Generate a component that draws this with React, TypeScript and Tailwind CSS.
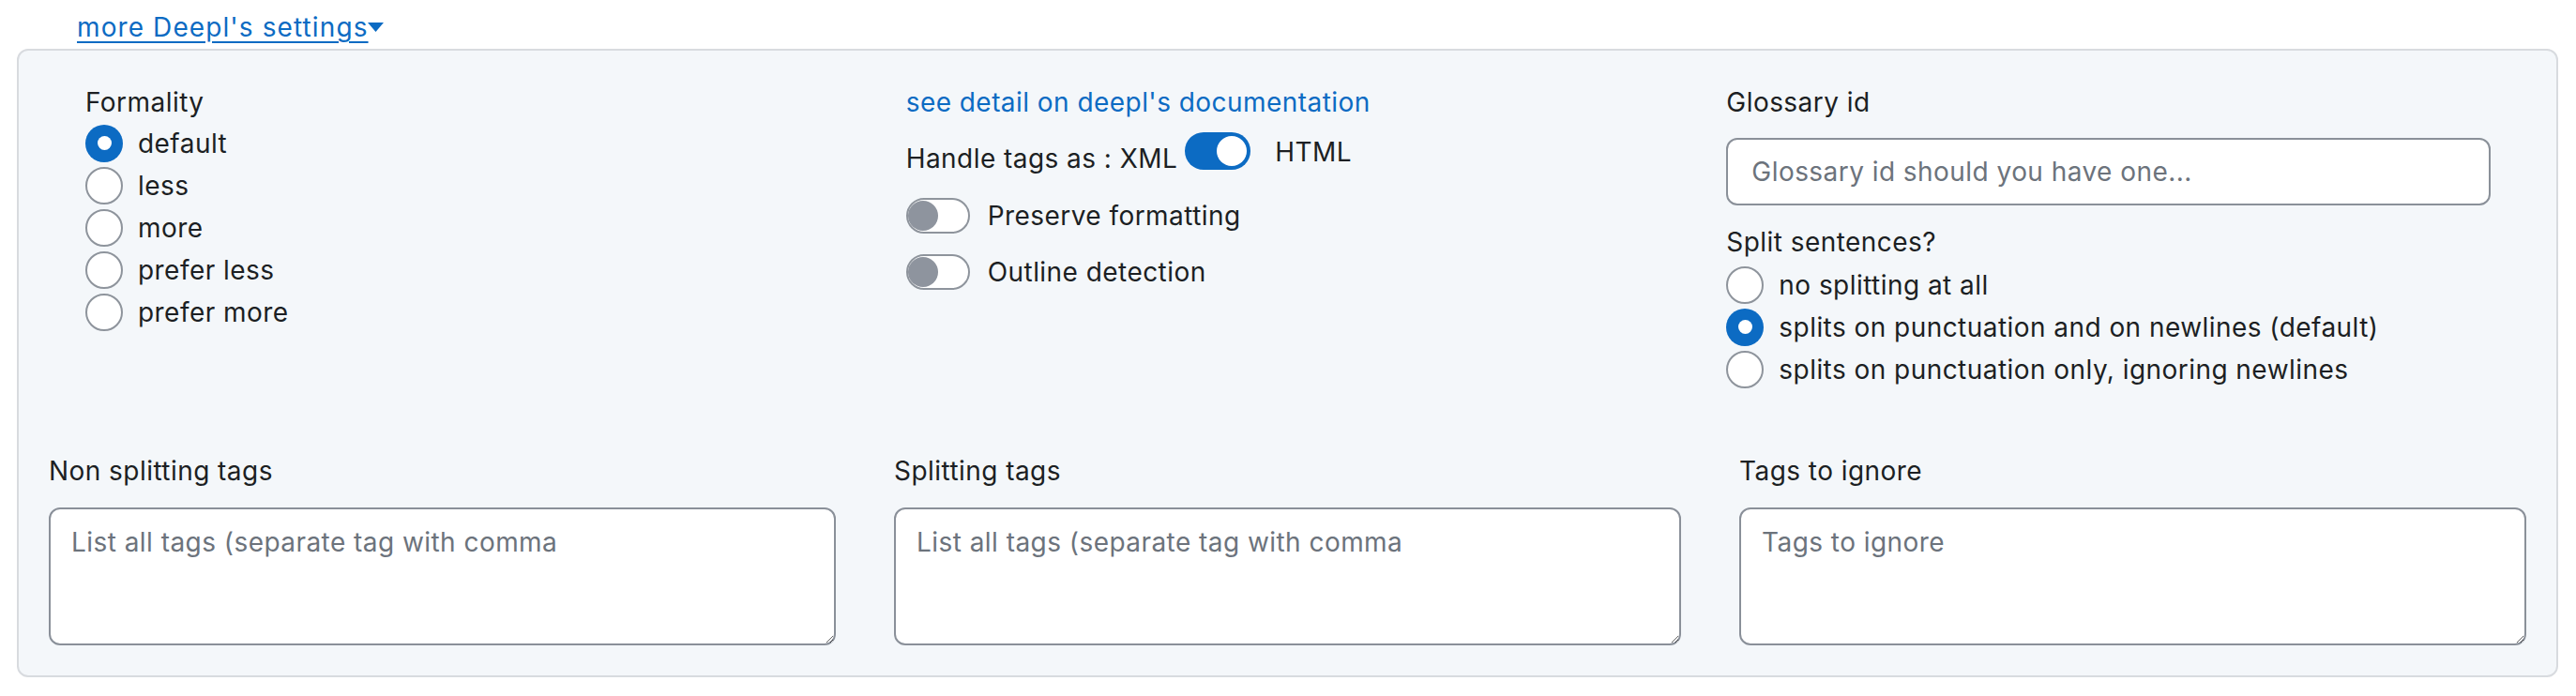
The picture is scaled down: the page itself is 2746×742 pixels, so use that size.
import React from 'react';

const BLUE = '#0c6bc3';

const Radio: React.FC<{ checked?: boolean; label: string }> = ({ checked, label }) => (
  <div className="flex h-[45px] items-center gap-[16px]">
    {checked ? (
      <span className="flex h-[40px] w-[40px] shrink-0 items-center justify-center rounded-full bg-[#0c6bc3]">
        <span className="h-[15px] w-[15px] rounded-full bg-white" />
      </span>
    ) : (
      <span className="h-[40px] w-[40px] shrink-0 rounded-full border-2 border-[#8e949c] bg-white" />
    )}
    <span>{label}</span>
  </div>
);

const SwitchOff: React.FC = () => (
  <span className="flex h-[38px] w-[68px] shrink-0 items-center rounded-full border-2 border-[#8e949c] bg-white">
    <span className="h-[32px] w-[32px] rounded-full bg-[#8e949e]" />
  </span>
);

const SwitchOn: React.FC = () => (
  <span className="flex h-[40px] w-[70px] shrink-0 items-center justify-end rounded-full bg-[#0c6bc3] p-[4px]">
    <span className="h-[32px] w-[32px] rounded-full bg-white" />
  </span>
);

const TagsField: React.FC<{ label: string; placeholder: string }> = ({ label, placeholder }) => (
  <div className="flex flex-col">
    <label className="h-[42px]">{label}</label>
    <textarea
      placeholder={placeholder}
      className="mt-[18px] h-[147px] w-full rounded-[12px] border-2 border-[#8a9099] bg-white px-[22px] pb-[12px] pt-[14px] text-[28px] leading-[42px] tracking-[0.45px] text-[#212529] outline-none placeholder:text-[#6c737c]"
    />
  </div>
);

export default function App() {
  return (
    <div className="min-h-[742px] bg-white pt-[8px] font-['Inter','Liberation_Sans',sans-serif] text-[28px] leading-[42px] tracking-[0.45px] text-[#1c1f23]">
      <div className="flex h-[42px] items-center pl-[82px]">
        <a href="#" className="tracking-[1.1px] text-[#0c6bc3] underline decoration-2 underline-offset-[5px]">
          {"more Deepl's settings "}
        </a>
        <svg width="17" height="10" viewBox="0 0 17 10" className="-ml-[1px]" fill={BLUE}>
          <polygon points="0,0 17,0 8.5,10" />
        </svg>
      </div>

      <div className="mr-[19px] ml-[18px] mt-[2px] rounded-[12px] border-2 border-[#d8dbdf] bg-[#f4f7fa] pb-[32px] pt-[34px]">
        <div className="grid grid-cols-3 items-start gap-x-[60px] pl-[71px] pr-[70px]">
          <div className="flex flex-col">
            <span className="h-[42px]">Formality</span>
            <Radio checked label="default" />
            <Radio label="less" />
            <Radio label="more" />
            <Radio label="prefer less" />
            <Radio label="prefer more" />
          </div>

          <div className="flex flex-col">
            <a href="#" className="h-[42px] text-[#0c6bc3]">
              see detail on deepl's documentation
            </a>
            <div className="mt-[18px] flex items-start">
              <span className="h-[42px]">Handle tags as : XML</span>
              <div className="ml-[8px] -mt-[7px] flex items-start">
                <SwitchOn />
                <span className="ml-[26px] h-[42px]">HTML</span>
              </div>
            </div>
            <div className="mt-[19px] flex h-[42px] items-center gap-[19px]">
              <SwitchOff />
              <span>Preserve formatting</span>
            </div>
            <div className="mt-[18px] flex h-[42px] items-center gap-[19px]">
              <SwitchOff />
              <span>Outline detection</span>
            </div>
          </div>

          <div className="flex flex-col">
            <label className="h-[42px]">Glossary id</label>
            <input
              type="text"
              placeholder="Glossary id should you have one..."
              className="mt-[17px] h-[72px] w-full rounded-[12px] border-2 border-[#8a9099] bg-white px-[25px] text-[28px] leading-[42px] tracking-[0.45px] text-[#212529] outline-none placeholder:text-[#6c737c]"
            />
            <span className="mt-[18px] h-[42px]">Split sentences?</span>
            <div className="mt-[2px] flex flex-col">
              <Radio label="no splitting at all" />
              <Radio checked label="splits on punctuation and on newlines (default)" />
              <Radio label="splits on punctuation only, ignoring newlines" />
            </div>
          </div>
        </div>

        <div className="mt-[65px] grid grid-cols-3 gap-x-[62px] px-[32px]">
          <TagsField label="Non splitting tags" placeholder="List all tags (separate tag with comma" />
          <TagsField label="Splitting tags" placeholder="List all tags (separate tag with comma" />
          <TagsField label="Tags to ignore" placeholder="Tags to ignore" />
        </div>
      </div>
    </div>
  );
}
